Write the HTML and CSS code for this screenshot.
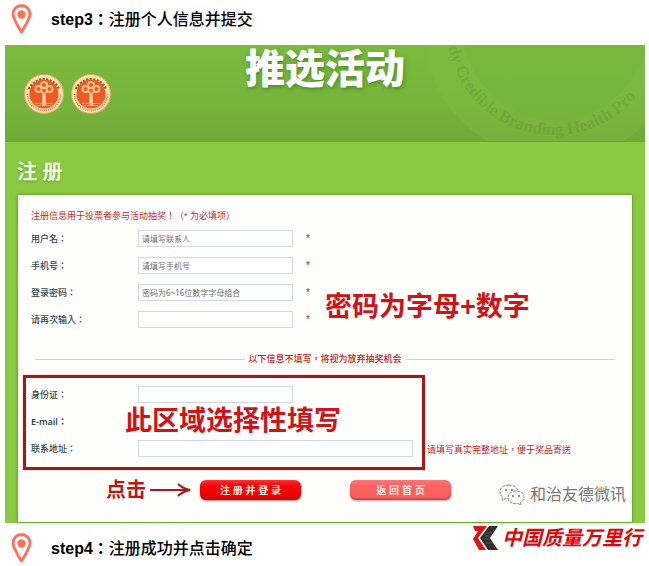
FILE: index.html
```html
<!DOCTYPE html>
<html lang="zh-TW">
<head>
    <meta charset="UTF-8">
    <meta name="viewport" content="width=device-width, initial-scale=1.0">
    <title>注册</title>
    <link rel="stylesheet" href="styles.css">
</head>
<body>
    <!-- Shared icons -->
    <svg class="sprite" width="0" height="0" aria-hidden="true">
        <symbol id="pin" viewBox="0 0 20 30">
            <path d="M10 1.500C5.200 1.500 1.500 5.200 1.500 10C1.500 14.500 5.500 20.500 10 28C14.500 20.500 18.500 14.500 18.500 10C18.500 5.200 14.800 1.500 10 1.500Z" fill="none" stroke="#ff7058" stroke-width="2.800" stroke-linejoin="round"/>
            <circle cx="10" cy="10.500" r="4.200" fill="#ff7058"/>
        </symbol>
        <symbol id="badge" viewBox="0 0 40 40">
            <circle cx="20" cy="20" r="20" fill="#e8a765"/>
            <circle cx="20" cy="20" r="19" fill="#ffe0ae"/>
            <path d="M5 15A16.500 16.500 0 0 1 35 15" fill="none" stroke="#7c572a" stroke-width="2.500" stroke-dasharray="2 1.500"/>
            <path d="M3.500 20A16.500 16.500 0 0 0 36.500 20" fill="none" stroke="#bd7746" stroke-width="1.500" stroke-dasharray="1 1"/>
            <circle cx="20" cy="20" r="14.500" fill="#ee5a23"/>
            <path d="M18 31L18.500 19L13 17L18 17L20 19L22 17L27 17L21.500 19L22 31Z" fill="#ffd09a"/>
            <g fill="none" stroke="#ffc88e" stroke-width="1.800">
                <circle cx="20" cy="11" r="3"/>
                <circle cx="14.500" cy="15" r="3"/>
                <circle cx="25.500" cy="15" r="3"/>
            </g>
            <path d="M11 29.500H29M13 31.500H27" stroke="#f9b37c" stroke-width="1"/>
        </symbol>
    </svg>

    <div class="step">
        <svg class="pin"><use href="#pin"/></svg>
        <h2>step3：<span>注册个人信息并提交</span></h2>
    </div>

    <div class="panel">
        <div class="banner">
            <svg class="seal" viewBox="0 0 215 96" aria-hidden="true">
                <circle cx="125" cy="-17" r="132" fill="#80bd49" fill-opacity="0.350"/>
                <circle cx="125" cy="-17" r="92" fill="#70b13b" fill-opacity="0.350"/>
                <path id="arc" d="M17 -17A107 107 0 0 0 231 -17" fill="none"/>
                <text><textPath href="#arc" startOffset="19">dy Credible Branding Health Pro</textPath></text>
            </svg>
            <div class="badges">
                <svg><use href="#badge"/></svg>
                <svg><use href="#badge"/></svg>
            </div>
            <h1>推选活动</h1>
        </div>

        <h3>注 册</h3>

        <form class="card">
            <div class="required">
                <p class="notice">注册信息用于投票者参与活动抽奖！（* 为必填项）</p>
                <div class="row">
                    <label for="username">用户名：</label>
                    <input type="text" id="username" placeholder="请填写联系人">
                    <span class="star">*</span>
                </div>
                <div class="row">
                    <label for="phone">手机号：</label>
                    <input type="text" id="phone" placeholder="请填写手机号">
                    <span class="star">*</span>
                </div>
                <div class="row">
                    <label for="password">登录密码：</label>
                    <input type="password" id="password" placeholder="密码为6~16位数字字母组合">
                    <span class="star">*</span>
                </div>
                <div class="row">
                    <label for="confirm">请再次输入：</label>
                    <input type="password" id="confirm">
                    <span class="star">*</span>
                </div>
                <strong class="callout password-tip">密码为字母+数字</strong>
            </div>

            <p class="divider">以下信息不填写，将视为放弃抽奖机会</p>

            <div class="extra">
                <div class="optional">
                    <div class="row">
                        <label for="idcard">身份证：</label>
                        <input type="text" id="idcard">
                    </div>
                    <div class="row">
                        <label for="email" class="latin">E-mail：</label>
                        <input type="email" id="email" class="plain">
                    </div>
                    <div class="row">
                        <label for="address">联系地址：</label>
                        <input type="text" id="address" class="wide">
                    </div>
                    <strong class="callout optional-tip">此区域选择性填写</strong>
                </div>
                <span class="hint">请填写真实完整地址，便于奖品寄送</span>
            </div>

            <div class="actions">
                <strong>点击</strong>
                <svg class="arrow" viewBox="0 0 42 14" aria-hidden="true">
                    <path d="M0 7H39M28 1Q32 5 40 7Q32 9 28 13" fill="none" stroke="#a8191d" stroke-width="2"/>
                </svg>
                <button type="submit">注 册 并 登 录</button>
                <button type="button" class="back">返 回 首 页</button>
            </div>

            <div class="account">
                <svg viewBox="0 0 26 22" aria-hidden="true">
                    <g fill="#fff" stroke="#858585" stroke-width="1" stroke-dasharray="3 1">
                        <path d="M10 1C4.500 1 1 4 1 8C1 10 2 12 4 13.500L3 16.500L7 14.500C14 16 19 12 19 8C19 4 15 1 10 1Z"/>
                        <path d="M17 7C12 7 9 10 9 13.500C9 18 14 20.500 19 19.500L22 21L21.500 18.500C24 17 25 15 25 13.500C25 10 22 7 17 7Z"/>
                    </g>
                    <path d="M6 6h2M12 6h2M13 12h2M19 12h2" stroke="#666" stroke-width="1.500"/>
                </svg>
                <span>和治友德微讯</span>
            </div>
        </form>
    </div>

    <div class="step">
        <svg class="pin"><use href="#pin"/></svg>
        <h2>step4：<span>注册成功并点击确定</span></h2>
        <div class="brand">
            <svg viewBox="0 0 26 26" aria-hidden="true">
                <path d="M0 1H14L5 13L13 25H6L0 14L5 6H2Z" fill="#d3181c"/>
                <path d="M16 1H25L17 13L25 25H15L7 13Z" fill="#303030"/>
                <path d="M13 8H19M11 11H17M11 14H17M13 18H20" stroke="#555" stroke-width="1"/>
            </svg>
            <strong>中国质量万里行</strong>
        </div>
    </div>
</body>
</html>
```

FILE: styles.css
```css
/* CSS Reset */
* {
    margin: 0;
    padding: 0;
    box-sizing: border-box;
}

/* General Styles */
body {
    font-family: "Liberation Sans", "Noto Sans CJK TC", sans-serif;
    background-color: #fff;
    padding: 0 4px 0 5px;
}

.sprite {
    position: absolute;
}

/* Step headings */
.step {
    display: flex;
    align-items: flex-start;
    height: 45px;
    padding: 4px 3px 0 6px;
}

.pin {
    width: 21px;
    height: 30px;
    margin-right: 19px;
}

.step h2 {
    font-size: 16px;
    line-height: 31px;
    color: #000;
}

.step h2 span {
    font-weight: 500;
}

/* Green page */
.panel {
    background-color: #8ac942;
    padding-bottom: 1px;
    margin-bottom: 6px;
}

.banner {
    position: relative;
    display: grid;
    grid-template-columns: 1fr auto 1fr;
    height: 97px;
    overflow: hidden;
    background: linear-gradient(#7aba3e, #76b53b 60%, #70a938);
}

.seal {
    position: absolute;
    top: 0;
    right: 0;
    width: 215px;
    height: 96px;
}

.seal text {
    font-family: "Liberation Serif", serif;
    font-size: 17px;
    font-weight: bold;
    fill: #5f9d33;
    fill-opacity: 0.4;
}

.badges {
    display: flex;
    gap: 7px;
    padding: 29px 0 0 19px;
}

.badges svg {
    width: 40px;
    height: 40px;
}

.banner h1 {
    font-size: 40px;
    font-weight: 900;
    line-height: 48px;
    color: #fff;
    text-shadow: 1px 2px 4px #4f8a25;
}

.panel h3 {
    padding: 8px 0 0 12px;
    font-size: 20px;
    line-height: 45px;
    color: #f4ffe4;
    text-shadow: 0 1px 2px #659c2c;
}

/* Form card */
.card {
    position: relative;
    margin: 0 13px;
    padding: 12px 5px 20px;
    background-color: #fefffd;
    box-shadow: 0 0 3px #4d7a1f;
    font-size: 9px;
}

.required {
    position: relative;
    padding-left: 8px;
}

.notice {
    line-height: 18px;
    color: #c22a2e;
}

.row {
    display: flex;
    align-items: center;
    height: 27px;
}

.row label {
    width: 107px;
    font-family: "Noto Sans", "Noto Sans CJK TC", sans-serif;
    font-weight: 500;
    color: #35474c;
}

.row .latin {
    font-weight: 600;
}

.row input {
    width: 155px;
    height: 17px;
    padding: 0 3px;
    border: 1px solid #d3d7e0;
    background-color: #fff;
    font-family: "Noto Sans", "Noto Sans CJK TC", sans-serif;
    font-size: 8px;
}

.row input::placeholder {
    color: #6d6d6d;
}

.row .wide {
    width: 275px;
}

.row .plain {
    border-color: transparent;
}

.star {
    margin-left: 13px;
    color: #b3262c;
    font-size: 10px;
}

/* Large red notes over the form */
.callout {
    position: absolute;
    font-size: 27px;
    line-height: 32px;
    color: #cd1418;
    white-space: nowrap;
    text-shadow: 0 0 3px #fff, 0 0 3px #fff;
}

.password-tip {
    left: 302px;
    top: 84px;
}

.optional-tip {
    left: 99px;
    top: 27px;
}

.divider {
    display: flex;
    align-items: center;
    gap: 4px;
    margin: 18px 12px 8px;
    line-height: 16px;
    font-weight: 500;
    color: #c01b20;
}

.divider::before,
.divider::after {
    content: "";
    flex: 1;
    height: 1px;
    background-color: #ccd4d6;
}

.extra {
    display: flex;
    align-items: flex-end;
}

.optional {
    position: relative;
    padding: 3px 9px 5px 5px;
    border: 3px solid #a4181c;
    box-shadow: 0 0 1px #d66;
}

.hint {
    margin-left: 2px;
    padding-bottom: 14px;
    color: #c01b20;
}

/* Buttons */
.actions {
    display: flex;
    align-items: center;
    padding: 8px 0 0 83px;
}

.actions strong {
    font-size: 20px;
    line-height: 24px;
    color: #b8181c;
}

.arrow {
    width: 42px;
    height: 14px;
    margin: 0 8px 0 4px;
}

.actions button {
    width: 101px;
    height: 20px;
    margin-right: 49px;
    padding-bottom: 2px;
    border: none;
    border-radius: 6px;
    background: linear-gradient(#f33, #f40505 30%, #ee0000);
    box-shadow: inset 0 -2px 1px #ad1515, 0 1px 2px #b77;
    font-family: "Liberation Sans", "Noto Sans CJK TC", sans-serif;
    font-size: 10px;
    font-weight: bold;
    color: #ffe4df;
    cursor: pointer;
}

.actions .back {
    margin-right: 0;
    background: linear-gradient(#f87777, #fb6262 30%, #f95e5e);
    box-shadow: inset 0 -2px 1px #cf4c50, 0 1px 2px #b99;
}

/* Account watermark */
.account {
    position: absolute;
    right: 6px;
    bottom: 15px;
    display: flex;
    align-items: center;
    gap: 5px;
    font-size: 16px;
    line-height: 24px;
    color: #777;
    text-shadow: -1px -1px 0 #fff;
}

.account svg {
    width: 26px;
    height: 22px;
}

/* Brand logo */
.brand {
    display: flex;
    align-items: center;
    gap: 3px;
    margin: -9px 0 0 auto;
}

.brand svg {
    width: 26px;
    height: 26px;
}

.brand strong {
    font-size: 20px;
    font-style: italic;
    line-height: 28px;
    color: #d9080c;
}
```
